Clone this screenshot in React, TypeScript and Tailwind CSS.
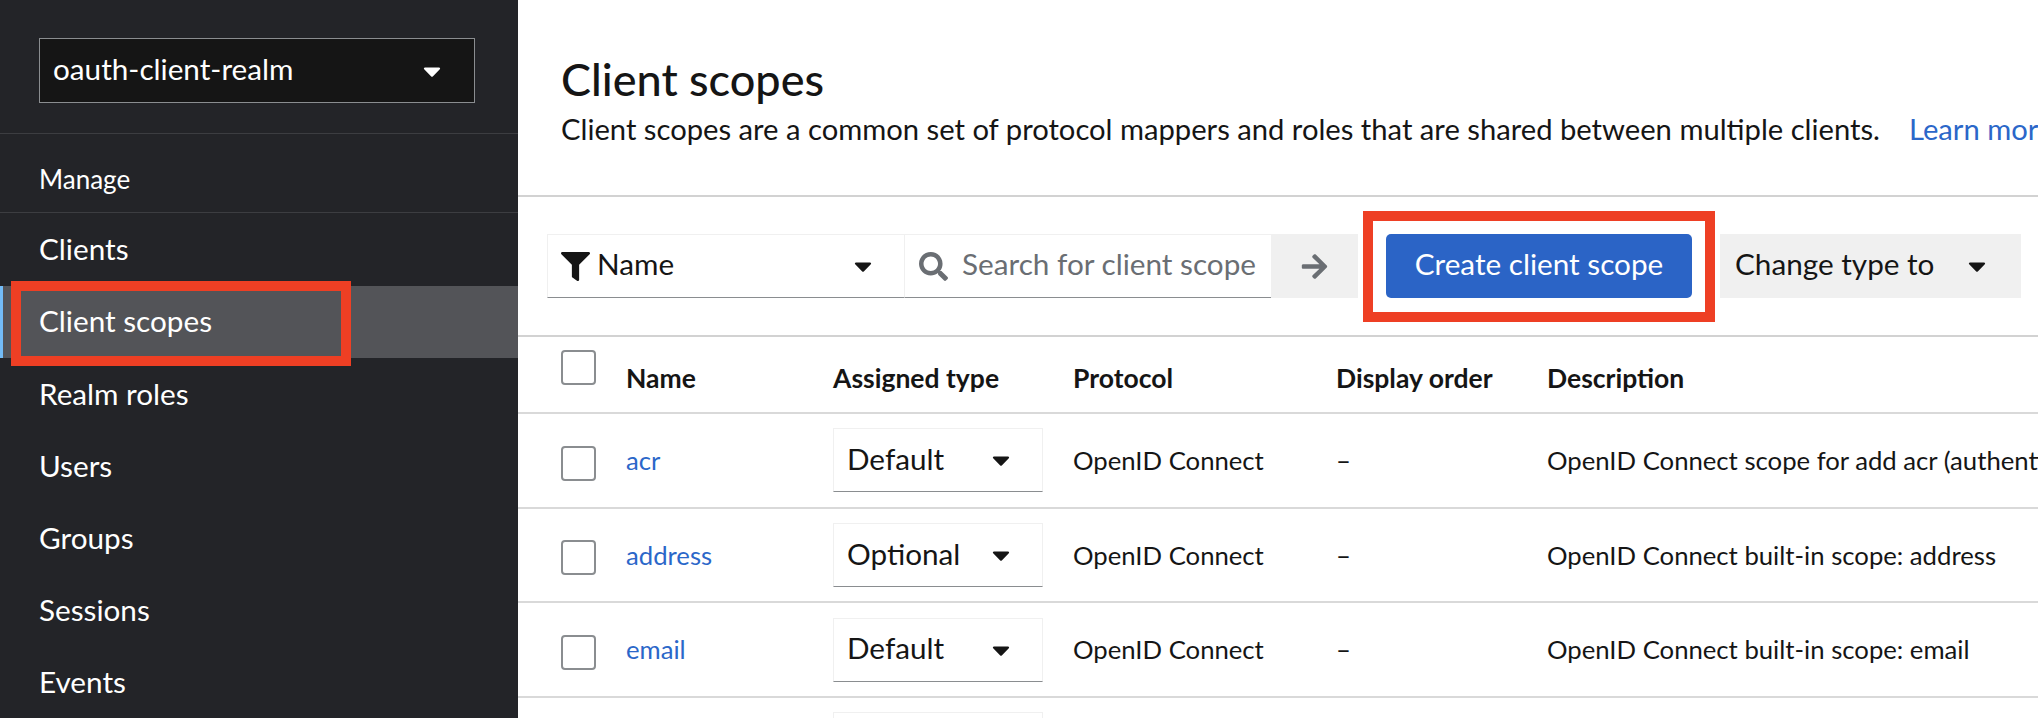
import { FaArrowRight, FaCaretDown, FaFilter, FaSearch } from "react-icons/fa";

const font = { fontFamily: '"Lato", "Liberation Sans", sans-serif' };

const nav = ["Clients", "Client scopes", "Realm roles", "Users", "Groups", "Sessions", "Events"];

const rows = [
  { name: "acr", type: "Default", desc: "OpenID Connect scope for add acr (authentication context class reference) to the token" },
  { name: "address", type: "Optional", desc: "OpenID Connect built-in scope: address" },
  { name: "email", type: "Default", desc: "OpenID Connect built-in scope: email" },
  { name: "microprofile-jwt", type: "Optional", desc: "Microprofile - JWT built-in scope" },
];

function Check() {
  return <div className="w-[35px] h-[35px] rounded-[4px] border-2 border-[#8a8d90] bg-white" />;
}

export default function App() {
  return (
    <div className="flex w-[2038px] h-[718px] overflow-hidden bg-white text-[#151515]" style={font}>
      <aside className="w-[518px] shrink-0 bg-[#232428] text-white flex flex-col">
        <div className="pt-[38px] pb-[30px] px-[39px] border-b border-[#3c3d41]">
          <div className="h-[65px] w-[436px] bg-[#151515] border border-[#8a8d90] flex items-center justify-between pl-[13px] pr-[28px] pb-[2px] text-[29.7px]">
            <span>oauth-client-realm</span>
            <FaCaretDown size={28} className="mt-[2px]" />
          </div>
        </div>
        <div className="h-[84px] pl-[39px] pt-[27px] text-[26px] leading-[36px] border-b border-[#3c3d41] mb-[1px]">Manage</div>
        {nav.map((n) => {
          const active = n === "Client scopes";
          return (
            <div
              key={n}
              className={
                active
                  ? "relative h-[72.5px] shrink-0 flex items-center pl-[36px] text-[29.7px] bg-[#535458] border-l-[3px] border-[#73bcf7]"
                  : "h-[72px] shrink-0 flex items-center pl-[39px] text-[29.7px]"
              }
            >
              {n}
              {active && <div className="absolute left-[8px] top-[-5px] w-[340px] h-[85px] border-[10px] border-[#ee3f24]" />}
            </div>
          );
        })}
      </aside>

      <main className="flex-1 min-w-0 overflow-hidden">
        <div className="h-[197px] border-b-2 border-[#d2d2d2] pl-[43px] pt-[53px]">
          <h1 className="text-[45px] leading-[52px] font-medium whitespace-nowrap">Client scopes</h1>
          <p className="text-[29.2px] leading-[36px] mt-[6px] whitespace-nowrap">
            Client scopes are a common set of protocol mappers and roles that are shared between multiple clients.
            <span className="ml-[29px] text-[#2b67c9]">Learn more</span>
          </p>
        </div>

        <div className="h-[140px] border-b-2 border-[#d2d2d2] pl-[29px] pt-[37px] flex items-start">
          <div className="w-[358px] h-[64px] border border-[#f0f0f0] border-b-[#8a8d90] flex items-center pl-[13px] pr-[27px] text-[29.7px]">
            <FaFilter size={29} className="mr-[7px]" />
            <span className="flex-1 pb-[3px]">Name</span>
            <FaCaretDown size={28} />
          </div>
          <div className="w-[366px] h-[64px] border-t border-[#f0f0f0] border-b border-b-[#8a8d90] flex items-center pl-[14px] text-[29.7px] text-[#6a6e73] whitespace-nowrap">
            <FaSearch size={29} className="mr-[14px] shrink-0" />
            <span className="pb-[3px]">Search for client scope</span>
          </div>
          <div className="w-[87px] h-[64px] bg-[#f0f0f0] flex items-center justify-center text-[#6a6e73]">
            <FaArrowRight size={29} />
          </div>
          <div className="relative ml-[28px] w-[306px] h-[64px]">
            <button className="w-full h-full rounded-[5px] bg-[#2b64c6] text-white text-[29.7px] pb-[3px] whitespace-nowrap">Create client scope</button>
            <div className="absolute left-[-23px] top-[-23px] w-[352px] h-[111px] border-[10px] border-[#ee3f24]" />
          </div>
          <div className="ml-[28px] w-[301px] h-[64px] bg-[#f0f0f0] flex items-center pl-[15px] text-[29.7px] whitespace-nowrap">
            <span className="w-[228px] pb-[3px]">Change type to</span>
            <FaCaretDown size={28} />
          </div>
        </div>

        <div className="h-[77px] border-b-2 border-[#d9d9d9] flex text-[26.5px] font-bold whitespace-nowrap">
          <div className="w-[108px] pl-[43px] pt-[13px]"><Check /></div>
          <div className="w-[207px] pt-[23px] leading-[36px]">Name</div>
          <div className="w-[240px] pt-[23px] leading-[36px]">Assigned type</div>
          <div className="w-[263px] pt-[23px] leading-[36px]">Protocol</div>
          <div className="w-[211px] pt-[23px] leading-[36px]">Display order</div>
          <div className="pt-[23px] leading-[36px]">Description</div>
        </div>

        {rows.map((r) => (
          <div key={r.name} className="h-[94.67px] border-b-2 border-[#d9d9d9] flex items-center text-[25.7px] whitespace-nowrap">
            <div className="w-[108px] shrink-0 pl-[43px] mt-[6px]"><Check /></div>
            <div className="w-[207px] shrink-0 text-[#2b67c9]">{r.name}</div>
            <div className="w-[240px] shrink-0">
              <div className="w-[210px] h-[64px] border border-[#f0f0f0] border-b-[#8a8d90] flex items-center pl-[13px] pb-[2px] text-[29.7px]">
                <span className="w-[140px]">{r.type}</span>
                <FaCaretDown size={28} className="mt-[2px]" />
              </div>
            </div>
            <div className="w-[263px] shrink-0">OpenID Connect</div>
            <div className="w-[211px] shrink-0">–</div>
            <div>{r.desc}</div>
          </div>
        ))}
      </main>
    </div>
  );
}
